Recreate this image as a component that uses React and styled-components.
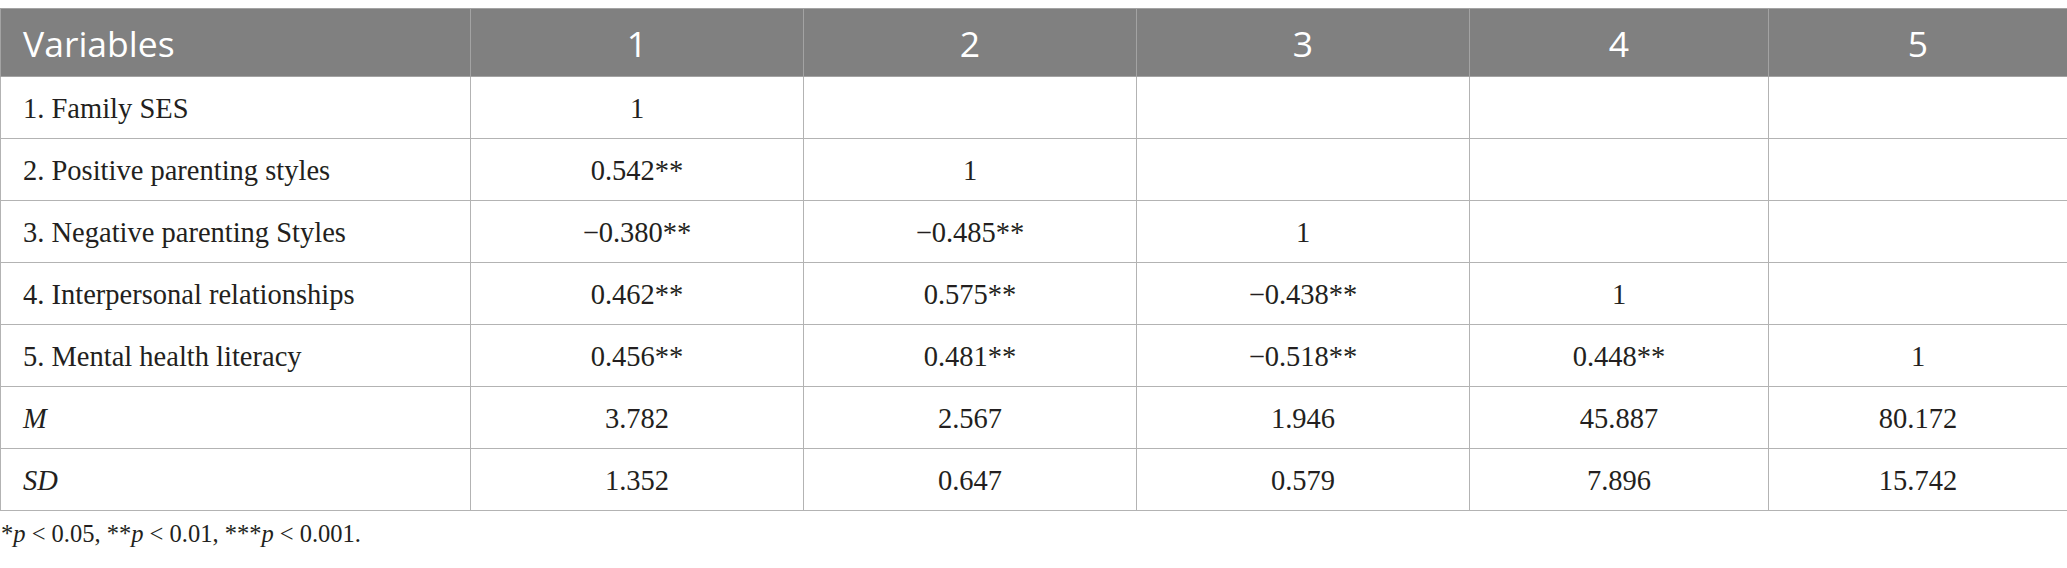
import React from "react";
import styled, { createGlobalStyle } from "styled-components";

const GlobalStyle = createGlobalStyle`
  html, body {
    margin: 0;
    padding: 0;
    background: #ffffff;
  }
`;

const Page = styled.div`
  padding-top: 8px;
  width: 2067px;
`;

const Table = styled.table`
  width: 2067px;
  table-layout: fixed;
  border-collapse: collapse;
  font-family: "Liberation Serif", "Times New Roman", serif;
`;

const HeadRow = styled.tr`
  height: 68px;
  background: #808080;
`;

const HeadCell = styled.th`
  border: 1px solid #a3a3a3;
  padding: 0 0 0 ${(p) => (p.$align === "left" ? "22px" : "0")};
  text-align: ${(p) => p.$align || "center"};
  vertical-align: middle;
  font-family: "Open Sans", "Noto Sans", sans-serif;
  font-weight: 400;
  font-size: 35.5px;
  color: #ffffff;
`;

const Row = styled.tr`
  height: 62px;
`;

const Cell = styled.td`
  border: 1px solid #b3b3b3;
  padding: 3px 0 0 ${(p) => (p.$align === "left" ? "22px" : "0")};
  text-align: ${(p) => p.$align || "center"};
  vertical-align: middle;
  font-size: 28.5px;
  font-style: ${(p) => (p.$italic ? "italic" : "normal")};
  color: #231f20;
  white-space: nowrap;
`;

const Footnote = styled.p`
  margin: 9px 0 0 1px;
  font-family: "Liberation Serif", "Times New Roman", serif;
  font-size: 24.5px;
  color: #231f20;
`;

const Ital = styled.i`
  font-style: italic;
`;

const widths = [470, 333, 333, 333, 299, 299];

const rows = [
  { label: "1. Family SES", values: ["1", "", "", "", ""] },
  { label: "2. Positive parenting styles", values: ["0.542**", "1", "", "", ""] },
  { label: "3. Negative parenting Styles", values: ["\u22120.380**", "\u22120.485**", "1", "", ""] },
  { label: "4. Interpersonal relationships", values: ["0.462**", "0.575**", "\u22120.438**", "1", ""] },
  { label: "5. Mental health literacy", values: ["0.456**", "0.481**", "\u22120.518**", "0.448**", "1"] },
  { label: "M", italic: true, values: ["3.782", "2.567", "1.946", "45.887", "80.172"] },
  { label: "SD", italic: true, values: ["1.352", "0.647", "0.579", "7.896", "15.742"] },
];

export default function App() {
  return (
    <Page>
      <GlobalStyle />
      <Table>
        <colgroup>
          {widths.map((w, i) => (
            <col key={i} style={{ width: w }} />
          ))}
        </colgroup>
        <thead>
          <HeadRow>
            <HeadCell $align="left">Variables</HeadCell>
            <HeadCell>1</HeadCell>
            <HeadCell>2</HeadCell>
            <HeadCell>3</HeadCell>
            <HeadCell>4</HeadCell>
            <HeadCell>5</HeadCell>
          </HeadRow>
        </thead>
        <tbody>
          {rows.map((r) => (
            <Row key={r.label}>
              <Cell $align="left" $italic={r.italic}>
                {r.label}
              </Cell>
              {r.values.map((v, i) => (
                <Cell key={i}>{v}</Cell>
              ))}
            </Row>
          ))}
        </tbody>
      </Table>
      <Footnote>
        *<Ital>p</Ital>{" < 0.05, **"}<Ital>p</Ital>{" < 0.01, ***"}
        <Ital>p</Ital>{" < 0.001."}
      </Footnote>
    </Page>
  );
}
